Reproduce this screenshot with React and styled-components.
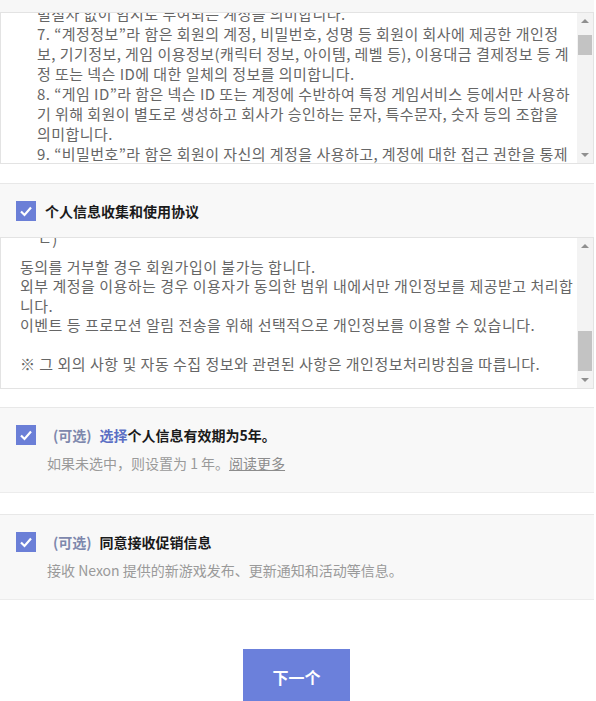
import React from 'react';
import styled, { createGlobalStyle } from 'styled-components';

const GlobalStyle = createGlobalStyle`
  body {
    margin: 0;
    background: #ffffff;
    font-family: 'Noto Sans CJK KR', 'Noto Sans CJK SC', sans-serif;
  }
`;

const Page = styled.div`
  width: 594px;
  display: flex;
  flex-direction: column;
`;

const TopStrip = styled.div`
  height: 12px;
  background: #f7f7f7;
`;

const Section = styled.div`
  display: flex;
  flex-direction: column;
  margin-bottom: ${props => props.$gap}px;
`;

const SectionHead = styled.div`
  height: 53px;
  display: flex;
  align-items: center;
  gap: 9px;
  padding-left: 16px;
  background: #f8f8f8;
  border-top: 1px solid #e8e8e8;
`;

const HeadTitle = styled.div`
  font-family: 'Noto Sans CJK SC', sans-serif;
  font-size: 14px;
  font-weight: 700;
  color: #1a1a1a;
`;

const TermsBox = styled.div`
  height: 150px;
  display: flex;
  background: #ffffff;
  border: 1px solid #e3e3e3;
`;

const TermsText = styled.div`
  flex: 1;
  overflow: hidden;
  padding-left: ${props => props.$indent}px;
  font-family: 'Noto Sans CJK KR', sans-serif;
  font-size: ${props => props.$size}px;
  letter-spacing: ${props => props.$track}px;
  color: #666666;
  line-height: ${props => props.$lh}px;
`;

const TermsInner = styled.div`
  margin-top: ${props => props.$offset}px;
`;

const Line = styled.div`
  white-space: pre;
  height: ${props => props.$lh}px;
  padding-left: ${props => props.$pad || 0}px;
  margin-bottom: ${props => props.$after || 0}px;
`;

const Scrollbar = styled.div`
  width: 16px;
  display: flex;
  flex-direction: column;
  background: #f3f3f3;
`;

const ArrowButton = styled.div`
  height: 16px;
  display: flex;
  align-items: center;
  justify-content: center;
`;

const Triangle = styled.div`
  width: 0;
  height: 0;
  border-left: 4px solid transparent;
  border-right: 4px solid transparent;
  ${props => props.$down
    ? 'border-top: 4px solid #8f8f8f;'
    : 'border-bottom: 4px solid #8f8f8f;'}
`;

const Track = styled.div`
  flex: 1;
  display: flex;
  flex-direction: column;
  padding: ${props => props.$top}px 1px 0;
`;

const Thumb = styled.div`
  height: ${props => props.$size}px;
  background: #c3c3c3;
`;

const OptionCard = styled.div`
  height: 86px;
  box-sizing: border-box;
  padding: 17px 0 0 16px;
  background: #f8f8f8;
  border-top: 1px solid #e8e8e8;
  border-bottom: 1px solid #ececec;
  margin-bottom: ${props => props.$gap}px;
  font-family: 'Noto Sans CJK SC', sans-serif;
`;

const OptionRow = styled.div`
  display: flex;
  align-items: center;
  gap: 17px;
`;

const OptionTitle = styled.div`
  font-size: 14px;
  font-weight: 700;
  color: #1a1a1a;
`;

const Optional = styled.span`
  color: #7e88ad;
  font-weight: 600;
  margin-right: 8px;
`;

const Highlight = styled.span`
  color: #5c6fc4;
  font-weight: 600;
`;

const OptionDesc = styled.div`
  margin: 8px 0 0 31px;
  font-size: 14px;
  color: #9a9a9a;
`;

const MoreLink = styled.a`
  color: #8c8c8c;
  text-decoration: underline;
`;

const Box = styled.div`
  width: 20px;
  height: 20px;
  flex-shrink: 0;
  display: flex;
  align-items: center;
  justify-content: center;
  background: #6b7fd7;
`;

const Footer = styled.div`
  display: flex;
  justify-content: center;
  padding: 49px 1px 0 0;
`;

const NextButton = styled.button`
  width: 107px;
  height: 60px;
  border: 0;
  background: #6b80db;
  color: #ffffff;
  font-family: 'Noto Sans CJK SC', sans-serif;
  font-size: 16px;
  font-weight: 700;
  padding-bottom: 6px;
`;

const Check = () => (
  <Box>
    <svg width="14" height="14" viewBox="0 0 14 14">
      <polyline points="2,7.5 5.5,11 12,3.5" fill="none" stroke="#ffffff" strokeWidth="2.2" />
    </svg>
  </Box>
);

const ScrollBar = ({ top, size }) => (
  <Scrollbar>
    <ArrowButton><Triangle /></ArrowButton>
    <Track $top={top}><Thumb $size={size} /></Track>
    <ArrowButton><Triangle $down /></ArrowButton>
  </Scrollbar>
);

const termsLines = [
  '별절차 없이 임시로 부여되는 계정을 의미합니다.',
  '7. “계정정보”라 함은 회원의 계정, 비밀번호, 성명 등 회원이 회사에 제공한 개인정',
  '보, 기기정보, 게임 이용정보(캐릭터 정보, 아이템, 레벨 등), 이용대금 결제정보 등 계',
  '정 또는 넥슨 ID에 대한 일체의 정보를 의미합니다.',
  '8. “게임 ID”라 함은 넥슨 ID 또는 계정에 수반하여 특정 게임서비스 등에서만 사용하',
  '기 위해 회원이 별도로 생성하고 회사가 승인하는 문자, 특수문자, 숫자 등의 조합을',
  '의미합니다.',
  '9. “비밀번호”라 함은 회원이 자신의 계정을 사용하고, 계정에 대한 접근 권한을 통제',
];

const privacyLines = [
  '동의를 거부할 경우 회원가입이 불가능 합니다.',
  '외부 계정을 이용하는 경우 이용자가 동의한 범위 내에서만 개인정보를 제공받고 처리합',
  '니다.',
  '이벤트 등 프로모션 알림 전송을 위해 선택적으로 개인정보를 이용할 수 있습니다.',
  ' ',
  '※ 그 외의 사항 및 자동 수집 정보와 관련된 사항은 개인정보처리방침을 따릅니다.',
];

const App = () => {
  return (
    <Page>
      <GlobalStyle />
      <Section $gap={19}>
        <TopStrip />
        <TermsBox>
          <TermsText $indent={36} $lh={20} $size={15} $track={0.45}>
            <TermsInner $offset={-9}>
              {termsLines.map((l, i) => <Line key={i} $lh={20}>{l}</Line>)}
            </TermsInner>
          </TermsText>
          <ScrollBar top={6} size={20} />
        </TermsBox>
      </Section>

      <Section $gap={18}>
        <SectionHead>
          <Check />
          <HeadTitle>个人信息收集和使用协议</HeadTitle>
        </SectionHead>
        <TermsBox>
          <TermsText $indent={19} $lh={19.5} $size={15} $track={0.5}>
            <TermsInner $offset={-9}>
              <Line $lh={19.5} $pad={18} $after={8}>ㄴ)</Line>
              {privacyLines.map((l, i) => <Line key={i} $lh={19.5}>{l}</Line>)}
            </TermsInner>
          </TermsText>
          <ScrollBar top={77} size={40} />
        </TermsBox>
      </Section>

      <OptionCard $gap={21}>
        <OptionRow>
          <Check />
          <OptionTitle>
            <Optional>(可选)</Optional>
            <Highlight>选择</Highlight>个人信息有效期为5年。
          </OptionTitle>
        </OptionRow>
        <OptionDesc>
          如果未选中，则设置为 1 年。<MoreLink>阅读更多</MoreLink>
        </OptionDesc>
      </OptionCard>

      <OptionCard $gap={0}>
        <OptionRow>
          <Check />
          <OptionTitle>
            <Optional>(可选)</Optional>同意接收促销信息
          </OptionTitle>
        </OptionRow>
        <OptionDesc>接收 Nexon 提供的新游戏发布、更新通知和活动等信息。</OptionDesc>
      </OptionCard>

      <Footer>
        <NextButton>下一个</NextButton>
      </Footer>
    </Page>
  );
};

export default App;
